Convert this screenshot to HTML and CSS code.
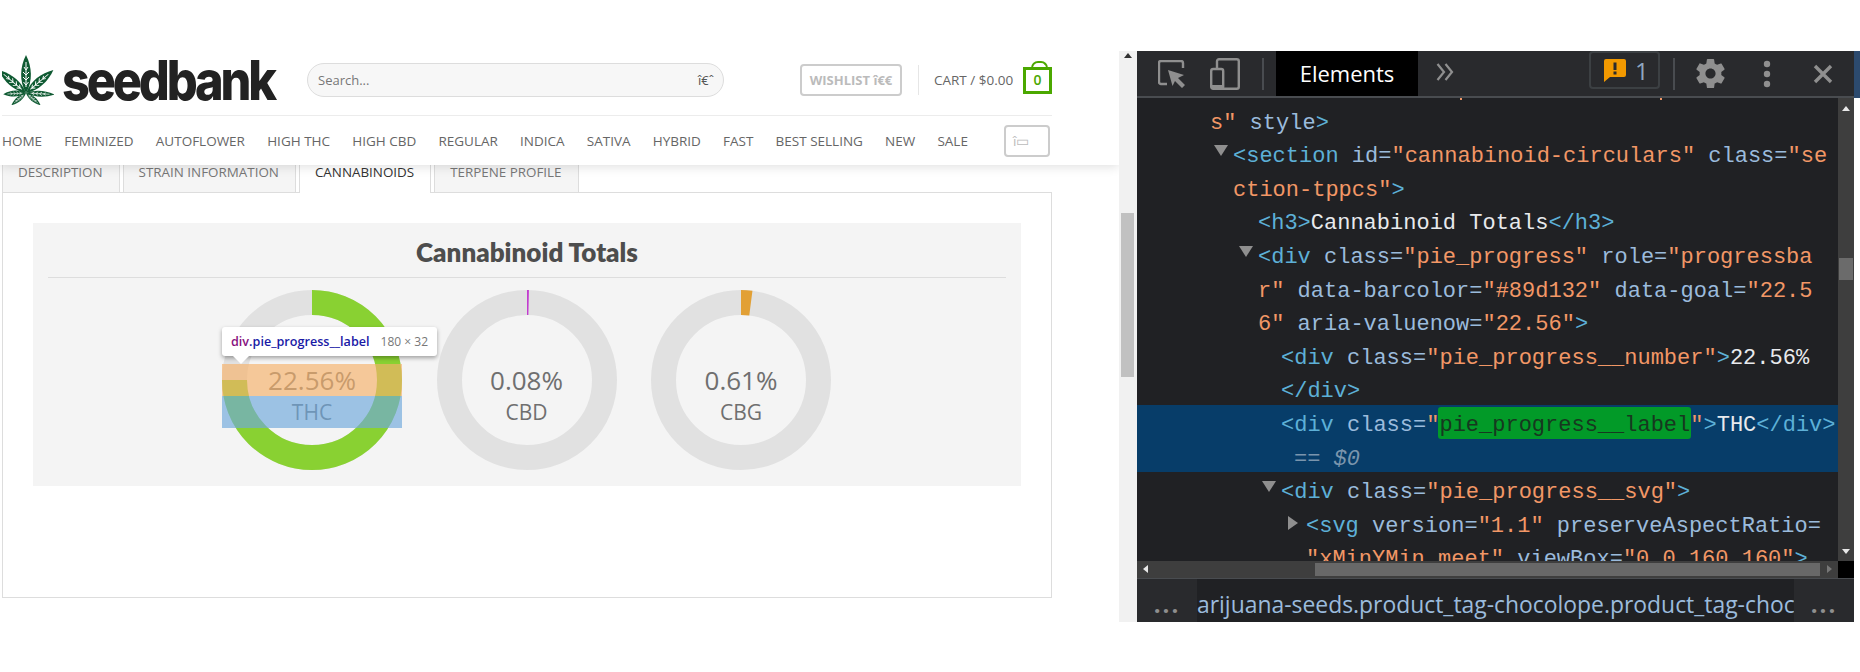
FILE: index.html
```html
<!DOCTYPE html>
<html lang="en">
<head>
  <meta charset="UTF-8">
  <meta name="viewport" content="width=device-width, initial-scale=1.0">
  <title>Seedbank - Cannabinoid Totals</title>
  <link rel="stylesheet" href="styles.css">
</head>
<body>

  <div class="site">
    <header class="site-header">
      <div class="top-row">
        <svg class="logo-leaf" viewBox="0 0 52 50" width="52" height="50">
          <defs>
            <g id="blade">
              <path d="M0 0C-7 -12 -6 -26 0 -38C6 -26 7 -12 0 0Z" fill="#0f5a32"/>
              <path d="M0 -6V-31M-2.5 -11L0 -8L2.5 -11M-3 -16L0 -13L3 -16M-3 -21L0 -18L3 -21M-2 -26L0 -23L2 -26" stroke="#fff" stroke-width="1" fill="none"/>
            </g>
          </defs>
          <g transform="translate(24 38)">
            <use href="#blade"/>
            <use href="#blade" transform="rotate(50) scale(.9 .94)"/>
            <use href="#blade" transform="rotate(-50) scale(.9 .94)"/>
            <use href="#blade" transform="rotate(93) scale(.6 .76)"/>
            <use href="#blade" transform="rotate(-93) scale(.6 .6)"/>
            <use href="#blade" transform="rotate(130) scale(.5 .5)"/>
            <use href="#blade" transform="rotate(-130) scale(.5 .5)"/>
          </g>
        </svg>
        <div class="wordmark">seedbank</div>
        <div class="search">
          <span>Search...</span>
          <span class="search-icon">î€ˆ</span>
        </div>
        <div class="wishlist">WISHLIST î€€</div>
        <div class="top-sep"></div>
        <div class="cart-text">CART / $0.00</div>
        <div class="cart-bag">0</div>
      </div>
      <nav class="nav-row">
        <a>HOME</a>
        <a>FEMINIZED</a>
        <a>AUTOFLOWER</a>
        <a>HIGH THC</a>
        <a>HIGH CBD</a>
        <a>REGULAR</a>
        <a>INDICA</a>
        <a>SATIVA</a>
        <a>HYBRID</a>
        <a>FAST</a>
        <a>BEST SELLING</a>
        <a>NEW</a>
        <a>SALE</a>
        <div class="nav-search">î▭</div>
      </nav>
    </header>

    <div class="tabs">
      <div class="tab">DESCRIPTION</div>
      <div class="tab">STRAIN INFORMATION</div>
      <div class="tab active">CANNABINOIDS</div>
      <div class="tab">TERPENE PROFILE</div>
    </div>

    <div class="tab-panel">
      <section class="totals">
        <h3>Cannabinoid Totals</h3>
        <div class="pies">
          <div class="pie">
            <svg class="pie-svg" viewBox="0 0 180 180">
              <circle class="pie-track" cx="90" cy="90" r="77.5"/>
              <circle class="pie-bar" cx="90" cy="90" r="77.5" pathLength="100" stroke="#89d132" stroke-dasharray="75 100"/>
            </svg>
            <div class="pie-number">22.56%</div>
            <div class="pie-label">THC</div>
            <div class="hl-margin"></div>
            <div class="hl-content"></div>
            <div class="inspect-tip">
              <span><span class="tip-tag">div</span><span class="tip-class">.pie_progress__label</span></span>
              <span class="tip-size">180 × 32</span>
            </div>
          </div>
          <div class="pie">
            <svg class="pie-svg" viewBox="0 0 180 180">
              <circle class="pie-track" cx="90" cy="90" r="77.5"/>
              <circle class="pie-bar" cx="90" cy="90" r="77.5" pathLength="100" stroke="#c23ccf" stroke-dasharray="0.35 100"/>
            </svg>
            <div class="pie-number">0.08%</div>
            <div class="pie-label">CBD</div>
          </div>
          <div class="pie">
            <svg class="pie-svg" viewBox="0 0 180 180">
              <circle class="pie-track" cx="90" cy="90" r="77.5"/>
              <circle class="pie-bar" cx="90" cy="90" r="77.5" pathLength="100" stroke="#e2a035" stroke-dasharray="2.05 100"/>
            </svg>
            <div class="pie-number">0.61%</div>
            <div class="pie-label">CBG</div>
          </div>
        </div>
      </section>
    </div>
  </div>

  <div class="page-scroll">
    <div class="sb-up"></div>
    <div class="page-thumb"></div>
  </div>

  <div class="devtools">
    <div class="dt-toolbar">
      <svg class="dt-inspect" viewBox="0 0 28 28" width="28" height="28">
        <path d="M9 24H3a2 2 0 0 1-2-2V3a2 2 0 0 1 2-2H23a2 2 0 0 1 2 2V8" fill="none" stroke="#8f8f8f" stroke-width="2.4"/>
        <path d="M10 10L26 15L20 18L27 25L24 28L17 21L14.5 26Z" fill="#8f8f8f"/>
      </svg>
      <svg class="dt-device" viewBox="0 0 30 32" width="30" height="32">
        <rect x="7" y="1.2" width="21.8" height="29.6" rx="2" fill="none" stroke="#8f8f8f" stroke-width="2.4"/>
        <rect x="1.2" y="11" width="12" height="19.8" rx="2" fill="#292a2d" stroke="#8f8f8f" stroke-width="2.4"/>
        <rect x="1" y="27" width="13" height="4" fill="#8f8f8f"/>
      </svg>
      <div class="dt-sep first"></div>
      <div class="dt-tab">Elements</div>
      <div class="dt-more">
        <svg viewBox="0 0 18 20" width="18" height="20">
          <path d="M1.5 2L8 10L1.5 18M9.5 2L16 10L9.5 18" fill="none" stroke="#8f8f8f" stroke-width="2.2"/>
        </svg>
      </div>
      <div class="dt-issues">
        <svg viewBox="0 0 22 23" width="22" height="23">
          <path d="M2 0H20a2 2 0 0 1 2 2V16a2 2 0 0 1-2 2H6L0 23V2a2 2 0 0 1 2-2Z" fill="#f29900"/>
          <path d="M9.5 3.5h3V11h-3zM9.5 12.5h3v3h-3z" fill="#292a2d"/>
        </svg>
        <span>1</span>
      </div>
      <div class="dt-sep"></div>
      <svg class="dt-gear" viewBox="2 2 20 20" width="29" height="29">
        <path fill="#8f8f8f" d="M19.43 12.98c.04-.32.07-.64.07-.98s-.03-.66-.07-.98l2.11-1.65c.19-.15.24-.42.12-.64l-2-3.46c-.12-.22-.39-.3-.61-.22l-2.49 1c-.52-.4-1.08-.73-1.69-.98l-.38-2.65C14.46 2.18 14.25 2 14 2h-4c-.25 0-.46.18-.49.42l-.38 2.65c-.61.25-1.17.59-1.69.98l-2.49-1c-.23-.09-.49 0-.61.22l-2 3.46c-.13.22-.07.49.12.64l2.11 1.65c-.04.32-.07.65-.07.98s.03.66.07.98l-2.11 1.65c-.19.15-.24.42-.12.64l2 3.46c.12.22.39.3.61.22l2.49-1c.52.4 1.08.73 1.69.98l.38 2.65c.03.24.24.42.49.42h4c.25 0 .46-.18.49-.42l.38-2.65c.61-.25 1.17-.59 1.69-.98l2.49 1c.23.09.49 0 .61-.22l2-3.46c.12-.22.07-.49-.12-.64l-2.11-1.65zM12 15.5c-1.93 0-3.5-1.57-3.5-3.5s1.57-3.5 3.5-3.5 3.5 1.57 3.5 3.5-1.57 3.5-3.5 3.5z"/>
      </svg>
      <svg class="dt-dots" viewBox="0 0 8 28" width="8" height="28">
        <circle cx="4" cy="4" r="3.2" fill="#8f8f8f"/>
        <circle cx="4" cy="14" r="3.2" fill="#8f8f8f"/>
        <circle cx="4" cy="24" r="3.2" fill="#8f8f8f"/>
      </svg>
      <svg class="dt-close" viewBox="0 0 20 20" width="20" height="20">
        <path d="M2 2L18 18M18 2L2 18" stroke="#8f8f8f" stroke-width="3.4"/>
      </svg>
      <div class="dt-edge"></div>
    </div>

    <div class="dt-main">
      <div class="dt-code">
        <div class="code-lines">
          <div class="clip-line"><i></i><i></i></div>
          <div class="ln i1"><span class="v">s"</span> <span class="a">style</span><span class="t">&gt;</span></div>
          <div class="ln i2"><i class="arr down"></i><span class="t">&lt;section</span> <span class="a">id=</span><span class="v">"cannabinoid-circulars"</span> <span class="a">class=</span><span class="v">"se</span></div>
          <div class="ln i2"><span class="v">ction-tppcs"</span><span class="t">&gt;</span></div>
          <div class="ln i3"><span class="t">&lt;h3&gt;</span><span class="w">Cannabinoid Totals</span><span class="t">&lt;/h3&gt;</span></div>
          <div class="ln i3"><i class="arr down"></i><span class="t">&lt;div</span> <span class="a">class=</span><span class="v">"pie_progress"</span> <span class="a">role=</span><span class="v">"progressba</span></div>
          <div class="ln i3"><span class="v">r"</span> <span class="a">data-barcolor=</span><span class="v">"#89d132"</span> <span class="a">data-goal=</span><span class="v">"22.5</span></div>
          <div class="ln i3"><span class="v">6"</span> <span class="a">aria-valuenow=</span><span class="v">"22.56"</span><span class="t">&gt;</span></div>
          <div class="ln i4"><span class="t">&lt;div</span> <span class="a">class=</span><span class="v">"pie_progress__number"</span><span class="t">&gt;</span><span class="w">22.56%</span></div>
          <div class="ln i4"><span class="t">&lt;/div&gt;</span></div>
          <div class="selected">
            <div class="ln i4"><span class="t">&lt;div</span> <span class="a">class=</span><span class="v">"</span><span class="match">pie_progress__label</span><span class="v">"</span><span class="t">&gt;</span><span class="w">THC</span><span class="t">&lt;/div&gt;</span></div>
            <div class="ln i5"><em class="eq">== $0</em></div>
          </div>
          <div class="ln i4"><i class="arr down"></i><span class="t">&lt;div</span> <span class="a">class=</span><span class="v">"pie_progress__svg"</span><span class="t">&gt;</span></div>
          <div class="ln i6"><i class="arr right"></i><span class="t">&lt;svg</span> <span class="a">version=</span><span class="v">"1.1"</span> <span class="a">preserveAspectRatio=</span></div>
          <div class="ln i6"><span class="v">"xMinYMin meet"</span> <span class="a">viewBox=</span><span class="v">"0 0 160 160"</span><span class="t">&gt;</span></div>
        </div>
      </div>
      <div class="dt-vscroll">
        <div class="sb-arrow up"></div>
        <div class="dt-vthumb"></div>
        <div class="sb-arrow dn"></div>
      </div>
    </div>

    <div class="dt-hscroll">
      <div class="dt-htrack">
        <div class="sb-arrow lf"></div>
        <div class="dt-hthumb"></div>
        <div class="sb-arrow rt"></div>
      </div>
      <div class="dt-corner"></div>
    </div>

    <div class="dt-crumbs">
      <div class="crumb-more">...</div>
      <div class="crumb-text">arijuana-seeds.product_tag-chocolope.product_tag-choc</div>
      <div class="crumb-more">...</div>
    </div>
  </div>

</body>
</html>
```
FILE: styles.css
```css
* {
  box-sizing: border-box;
}
body {
  margin: 0;
  width: 1860px;
  height: 672px;
  overflow: hidden;
  background-color: #fff;
  font-family: "Open Sans", sans-serif;
  display: grid;
  grid-template-columns: 1119px 18px 717px 6px;
}

/* site */
.site {
  height: 672px;
  overflow: hidden;
}
.site-header {
  position: relative;
  z-index: 2;
  height: 165px;
  padding: 0 67px 0 2px;
  background-color: #fff;
  box-shadow: 0 2px 10px rgba(0, 0, 0, 0.12);
}
.top-row {
  display: flex;
  align-items: center;
  height: 116px;
  padding-top: 45px;
  border-bottom: 1px solid #ececec;
}
.logo-leaf {
  flex: none;
}
.wordmark {
  margin-left: 8px;
  width: 245px;
  font-family: Inter, sans-serif;
  font-weight: 800;
  font-size: 55px;
  line-height: 60px;
  letter-spacing: -3.6px;
  color: #222;
  transform: scaleX(0.885);
  transform-origin: left center;
}
.search {
  display: flex;
  justify-content: space-between;
  align-items: center;
  width: 417px;
  height: 34px;
  padding: 0 9px 0 10px;
  background-color: #f7f7f7;
  border: 1px solid #ddd;
  border-radius: 17px;
  font-size: 13px;
  color: #777;
}
.search-icon {
  color: #555;
}
.wishlist {
  margin-left: 76px;
  width: 102px;
  height: 32px;
  border: 2px solid #ccc;
  border-radius: 4px;
  font-size: 13px;
  font-weight: 700;
  line-height: 28px;
  text-align: center;
  white-space: nowrap;
  color: #bbb;
}
.top-sep {
  margin-left: 16px;
  width: 1px;
  height: 30px;
  background-color: #e6e6e6;
}
.cart-text {
  margin-left: 15px;
  width: 89px;
  font-size: 13.5px;
  white-space: nowrap;
  color: #666;
}
.cart-bag {
  position: relative;
  width: 29px;
  height: 27px;
  border: 3px solid #4ba800;
  font-size: 14px;
  font-weight: 600;
  line-height: 19px;
  text-align: center;
  color: #4ba800;
}
.cart-bag::before {
  content: "";
  position: absolute;
  left: 5px;
  top: -9px;
  width: 13px;
  height: 7px;
  border: 2px solid #4ba800;
  border-bottom: none;
  border-radius: 7px 7px 0 0;
}
.nav-row {
  display: flex;
  align-items: center;
  gap: 22.2px;
  height: 49px;
  font-size: 13.5px;
  white-space: nowrap;
  color: #666;
}
.nav-search {
  margin: 0 2px 0 auto;
  width: 46px;
  height: 32px;
  padding-left: 7px;
  border: 2px solid #ccc;
  border-radius: 4px;
  line-height: 28px;
  color: #bbb;
}
.tabs {
  display: flex;
  gap: 3px;
  height: 28px;
  margin-left: 2px;
}
.tab {
  height: 28px;
  padding: 0 16px 0 15px;
  background-color: #f5f5f5;
  border: 1px solid #ddd;
  border-top: none;
  font-size: 13.4px;
  line-height: 15px;
  color: #777;
}
.tab.active {
  position: relative;
  z-index: 1;
  background-color: #fff;
  border-bottom: none;
  color: #333;
}
.tab-panel {
  width: 1050px;
  height: 406px;
  margin: -1px 0 0 2px;
  padding: 30px;
  border: 1px solid #ddd;
}
.totals {
  height: 263px;
  padding: 0 15px;
  background-color: #f4f4f4;
}
.totals h3 {
  height: 55px;
  margin: 0;
  border-bottom: 1px solid #ddd;
  font-family: Lato, sans-serif;
  font-size: 26px;
  font-weight: 800;
  line-height: 58px;
  text-align: center;
  color: #4d4d4d;
}
.pies {
  display: flex;
  justify-content: center;
  gap: 34.5px;
  margin: 12px 1px 0 0;
}
.pie {
  position: relative;
  width: 180px;
  height: 180px;
  padding-top: 74px;
  text-align: center;
}
.pie-svg {
  position: absolute;
  left: 0;
  top: 0;
  width: 180px;
  height: 180px;
}
.pie-track,
.pie-bar {
  fill: none;
  stroke-width: 25;
}
.pie-track {
  stroke: #e1e1e1;
}
.pie-bar {
  transform: rotate(-90deg);
  transform-origin: 90px 90px;
}
.pie-number {
  position: relative;
  height: 32px;
  font-size: 26px;
  line-height: 32px;
  color: #6f6f6f;
}
.pie-label {
  position: relative;
  height: 32px;
  font-size: 21px;
  line-height: 32px;
  color: #6f6f6f;
}

/* inspector overlay */
.hl-margin,
.hl-content {
  position: absolute;
  left: 0;
  width: 180px;
  height: 32px;
}
.hl-margin {
  top: 74px;
  background-color: rgba(246, 178, 107, 0.66);
}
.hl-content {
  top: 106px;
  background-color: rgba(111, 168, 220, 0.66);
}
.inspect-tip {
  position: absolute;
  left: 0;
  top: 37px;
  display: flex;
  justify-content: space-between;
  align-items: center;
  width: 215px;
  height: 29px;
  padding: 0 9px;
  background-color: #fff;
  border-radius: 3px;
  box-shadow: 0 2px 4px rgba(0, 0, 0, 0.35);
  font-size: 12.6px;
  white-space: nowrap;
}
.inspect-tip::after {
  content: "";
  position: absolute;
  left: 11px;
  top: 29px;
  border-left: 8px solid transparent;
  border-right: 8px solid transparent;
  border-top: 8px solid #fff;
}
.tip-tag {
  font-weight: 600;
  color: #881280;
}
.tip-class {
  font-weight: 600;
  color: #1a1aa6;
}
.tip-size {
  font-size: 12px;
  color: #777;
}

/* page scrollbar */
.page-scroll {
  position: relative;
  height: 571px;
  margin-top: 51px;
  background-color: #f1f1f1;
}
.sb-up {
  position: absolute;
  left: 5px;
  top: 2px;
  border-left: 4px solid transparent;
  border-right: 4px solid transparent;
  border-bottom: 5px solid #333;
}
.page-thumb {
  position: absolute;
  left: 2px;
  top: 162px;
  width: 13px;
  height: 164px;
  background-color: #c1c1c1;
}

/* devtools */
.devtools {
  display: flex;
  flex-direction: column;
  height: 571px;
  margin-top: 51px;
  background-color: #202124;
}
.dt-toolbar {
  position: relative;
  display: flex;
  align-items: center;
  flex: none;
  height: 47px;
  padding-left: 21px;
  background-color: #292a2d;
  border-bottom: 2px solid #494c50;
}
.dt-device {
  margin-left: 24px;
}
.dt-sep {
  flex: none;
  width: 2px;
  height: 32px;
  margin-left: 13px;
  background-color: #494c50;
}
.dt-sep.first {
  margin-left: 22px;
}
.dt-tab {
  align-self: stretch;
  width: 142px;
  margin-left: 12px;
  background-color: #000;
  font-size: 22px;
  line-height: 44px;
  text-align: center;
  color: #fff;
}
.dt-more {
  display: flex;
  flex: none;
  width: 153px;
  margin: -4px 0 0 18px;
}
.dt-issues {
  display: flex;
  align-items: center;
  gap: 9px;
  flex: none;
  width: 71px;
  height: 38px;
  margin-top: -7px;
  padding-left: 13px;
  border: 2px solid #3c4043;
  border-radius: 4px;
  font-size: 24px;
  color: #8fa7c0;
}
.dt-gear {
  margin-left: 21px;
}
.dt-dots {
  margin-left: 38px;
}
.dt-close {
  margin-left: 42px;
}
.dt-edge {
  position: absolute;
  left: 717px;
  top: 0;
  width: 6px;
  height: 47px;
  background-color: #2c4a6e;
}
.dt-main {
  display: flex;
  flex: none;
  height: 463px;
}
.dt-code {
  width: 701px;
  overflow: hidden;
}
.code-lines {
  font-family: "Liberation Mono", monospace;
  font-size: 22px;
}
.clip-line {
  display: flex;
  gap: 198px;
  height: 4.6px;
  padding-left: 323px;
}
.clip-line i {
  width: 2px;
  height: 2px;
  background-color: #f29766;
}
.ln {
  height: 33.6px;
  line-height: 42px;
  white-space: pre;
}
.i1 {
  padding-left: 73px;
}
.i2 {
  padding-left: 96px;
}
.i3 {
  padding-left: 121px;
}
.i4 {
  padding-left: 144px;
}
.i5 {
  padding-left: 157px;
}
.i6 {
  padding-left: 169px;
}
.t {
  color: #5db0d7;
}
.a {
  color: #9bbbdc;
}
.v {
  color: #f29766;
}
.w {
  color: #e8eaed;
}
.selected {
  background-color: #073d69;
}
.match {
  display: inline-block;
  height: 32px;
  margin: 0 -1px;
  padding: 0 1px;
  background-color: #029a28;
  border-radius: 3px;
  line-height: 38px;
  color: #17381f;
}
.eq {
  color: #7a95ad;
}
.arr {
  display: inline-block;
  width: 0;
  height: 0;
  vertical-align: 6px;
}
.arr.down {
  border-left: 7px solid transparent;
  border-right: 7px solid transparent;
  border-top: 11px solid #8f8f8f;
  margin-left: -19px;
  margin-right: 5px;
}
.arr.right {
  border-top: 7px solid transparent;
  border-bottom: 7px solid transparent;
  border-left: 10px solid #8f8f8f;
  margin-left: -18px;
  margin-right: 8px;
  vertical-align: 2px;
}
.dt-vscroll {
  position: relative;
  width: 16px;
  background-color: #3e3e3e;
}
.dt-vthumb {
  position: absolute;
  left: 1px;
  top: 160px;
  width: 14px;
  height: 22px;
  background-color: #6b6b6b;
}
.sb-arrow {
  position: absolute;
  width: 0;
  height: 0;
}
.sb-arrow.up {
  left: 4px;
  top: 8px;
  border-left: 4px solid transparent;
  border-right: 4px solid transparent;
  border-bottom: 5px solid #e8e8e8;
}
.sb-arrow.dn {
  left: 4px;
  bottom: 7px;
  border-left: 4px solid transparent;
  border-right: 4px solid transparent;
  border-top: 5px solid #e8e8e8;
}
.sb-arrow.lf {
  left: 6px;
  top: 4px;
  border-top: 4px solid transparent;
  border-bottom: 4px solid transparent;
  border-right: 5px solid #e8e8e8;
}
.sb-arrow.rt {
  right: 6px;
  top: 4px;
  border-top: 4px solid transparent;
  border-bottom: 4px solid transparent;
  border-left: 5px solid #777;
}
.dt-hscroll {
  display: flex;
  flex: none;
  height: 17px;
}
.dt-htrack {
  position: relative;
  width: 701px;
  background-color: #3e3e3e;
}
.dt-hthumb {
  position: absolute;
  left: 178px;
  top: 2px;
  width: 505px;
  height: 13px;
  background-color: #686868;
}
.dt-corner {
  width: 16px;
  background-color: #000;
}
.dt-crumbs {
  display: flex;
  flex: none;
  height: 44px;
  background-color: #292a2d;
  border-top: 1px solid #494c50;
}
.crumb-more {
  flex: none;
  width: 60px;
  font-size: 24px;
  font-weight: 700;
  line-height: 50px;
  letter-spacing: 2px;
  text-align: center;
  color: #8f8f8f;
}
.crumb-text {
  width: 598px;
  overflow: hidden;
  background-color: #202124;
  font-size: 22.9px;
  line-height: 52px;
  white-space: nowrap;
  color: #9bbbdc;
}
```
